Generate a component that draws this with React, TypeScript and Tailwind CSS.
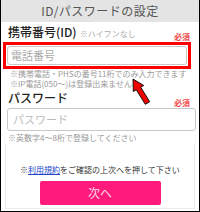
const jp = { fontFamily: '"Noto Sans CJK JP", "Noto Sans", sans-serif' };

function Required({ className = '' }: { className?: string }) {
  return <span className={`text-[8px] leading-[10px] text-[#f04848] font-bold ${className}`}>必須</span>;
}

function Arrow() {
  return (
    <svg className="absolute left-0 top-0 pointer-events-none" width="200" height="212" viewBox="0 0 200 212">
      <polygon
        points="132,79 142.7,85.5 139.7,87.2 148.7,101.7 144.3,104.3 135.3,89.8 132.3,91.5"
        fill="#ee0000"
        stroke="#111"
        strokeWidth="1"
        strokeLinejoin="round"
      />
    </svg>
  );
}

export default function App() {
  return (
    <div className="relative w-[200px] h-[212px] bg-white border-l border-r border-b border-black overflow-hidden" style={jp}>
      <div className="h-[22px] bg-[#e4e4e4] flex items-center justify-center text-[12px] text-[#555] tracking-[0.5px]">
        ID/パスワードの設定
      </div>

      <div className="flex items-end justify-between pl-[7px] pr-[9px] h-[16px] mt-[2px]">
        <div className="flex items-baseline gap-[3px]">
          <span className="text-[12px] leading-[14px] text-[#222] font-medium">携帯番号(ID)</span>
          <span className="text-[8px] text-[#aaa]">※ハイフンなし</span>
        </div>
        <Required className="mb-[-2px]" />
      </div>

      <div className="ml-[2px] mt-[2px] w-[188px] h-[27px] border-[3px] border-[#ff0000] p-[1px]">
        <div className="h-full rounded-[3px] border border-[#c8c8c8] flex items-center pl-[3px] text-[11px] text-[#aaa]">
          電話番号
        </div>
      </div>

      <div className="pl-[9px] text-[8px] leading-[10px] text-[#999]">
        <div>※携帯電話・PHSの番号11桁でのみ入力できます</div>
        <div>※IP電話(050〜)は登録出来ません</div>
      </div>

      <div className="flex items-end justify-between pl-[7px] pr-[9px] h-[14px] mt-[2px]">
        <span className="text-[12px] leading-[14px] text-[#222] font-medium">パスワード</span>
        <Required className="mb-[-3px]" />
      </div>

      <div className="ml-[6px] mt-[3px] w-[189px] h-[23px] rounded-[3px] border border-[#c8c8c8] flex items-center pl-[5px] text-[11px] text-[#bbb]">
        パスワード
      </div>

      <div className="pl-[7px] mt-[2px] text-[8px] leading-[10px] text-[#999]">※英数字4〜8桁で登録してください</div>

      <div className="ml-[4px] w-[190px] h-[66px] border-l border-r border-b border-[#ececec] flex flex-col items-center">
        <div className="mt-[22px] text-[8px] leading-[10px] text-[#333]">
          ※<span className="text-[#2244cc] underline">利用規約</span>をご確認の上次へを押して下さい
        </div>
        <div className="mt-[6px] w-[121px] h-[24px] rounded-[2px] bg-[#ff1a7c] flex items-center justify-center text-[12px] text-[#ffd6e6]">
          次へ
        </div>
      </div>

      <Arrow />
    </div>
  );
}
